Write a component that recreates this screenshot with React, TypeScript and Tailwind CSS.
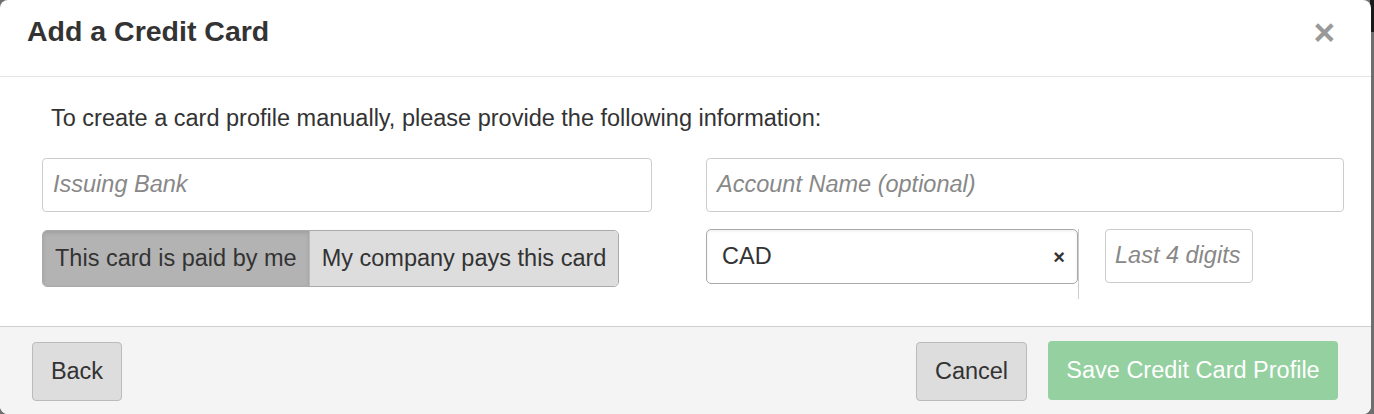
import React from "react";

export default function App() {
  return (
    <div
      className="w-[1374px] h-[414px] overflow-hidden bg-[#6f6f6f] relative"
      style={{ fontFamily: '"Liberation Sans", Arial, sans-serif' }}
    >
      <div className="absolute right-0 top-0 w-[4px] h-[32px] bg-[#1a1a1a]" />
      <div className="relative w-[1371px] h-[414px] bg-white rounded-[8px] overflow-hidden flex flex-col">
        {/* Header */}
        <div className="h-[77px] border-b border-[#e5e5e5] flex items-center justify-between pl-[27px] pr-[36px] shrink-0">
          <h1 className="text-[28.5px] font-bold text-[#333] leading-none -mt-[14px]">Add a Credit Card</h1>
          <span className="text-[37px] font-bold text-[#999] leading-none -mt-[12px]">×</span>
        </div>
        {/* Body */}
        <div className="flex-1 pl-[42px] pr-[27px] pt-[27px]">
          <p className="text-[23.5px] text-[#333] leading-[28px] pl-[9px]">
            To create a card profile manually, please provide the following information:
          </p>
          <div className="flex mt-[26px] gap-[54px]">
            <div className="w-[610px] flex flex-col gap-[18px]">
              <div className="h-[54px] border border-[#ccc] rounded-[4px] flex items-center px-[10px]">
                <span className="text-[23.5px] italic text-[#888]">Issuing Bank</span>
              </div>
              <div className="flex h-[57px] self-start border border-[#aaa] rounded-[5px] overflow-hidden">
                <div className="px-[12px] bg-[#b3b3b3] flex items-center text-[23.5px] text-[#333] shadow-[inset_0_2px_4px_rgba(0,0,0,0.12)]">
                  This card is paid by me
                </div>
                <div className="px-[12px] bg-[#dddddd] flex items-center text-[23.5px] text-[#333] border-l border-[#bbb]">
                  My company pays this card
                </div>
              </div>
            </div>
            <div className="w-[638px] flex flex-col gap-[17px]">
              <div className="h-[54px] border border-[#ccc] rounded-[4px] flex items-center px-[10px]">
                <span className="text-[23.5px] italic text-[#888]">Account Name (optional)</span>
              </div>
              <div className="flex items-start">
                <div className="w-[372px] h-[55px] border border-[#aaa] rounded-[5px] flex items-center justify-between pl-[15px] pr-[12px] shadow-[inset_0_1px_3px_rgba(0,0,0,0.08)]">
                  <span className="text-[23.5px] text-[#333]">CAD</span>
                  <span className="text-[20px] font-bold text-[#333] leading-none">×</span>
                </div>
                <div className="w-px h-[70px] bg-[#ccc]" />
                <div className="ml-[26px] w-[148px] h-[54px] border border-[#ccc] rounded-[4px] flex items-center px-[9px]">
                  <span className="text-[23.5px] italic text-[#888] whitespace-nowrap">Last 4 digits</span>
                </div>
              </div>
            </div>
          </div>
        </div>
        {/* Footer */}
        <div className="h-[88px] shrink-0 bg-[#f4f4f4] border-t border-[#cfcfcf] flex items-start justify-between pl-[32px] pr-[33px] pt-[15px]">
          <button className="w-[90px] h-[59px] bg-[#dddddd] border border-[#bbb] rounded-[4px] text-[23.5px] text-[#333]">
            Back
          </button>
          <div className="flex gap-[21px]">
            <button className="w-[111px] h-[59px] bg-[#dddddd] border border-[#bbb] rounded-[4px] text-[23.5px] text-[#333]">
              Cancel
            </button>
            <button className="w-[290px] h-[59px] -mt-[1px] bg-[#95d0a0] rounded-[4px] text-[23.5px] text-white whitespace-nowrap">
              Save Credit Card Profile
            </button>
          </div>
        </div>
      </div>
    </div>
  );
}
